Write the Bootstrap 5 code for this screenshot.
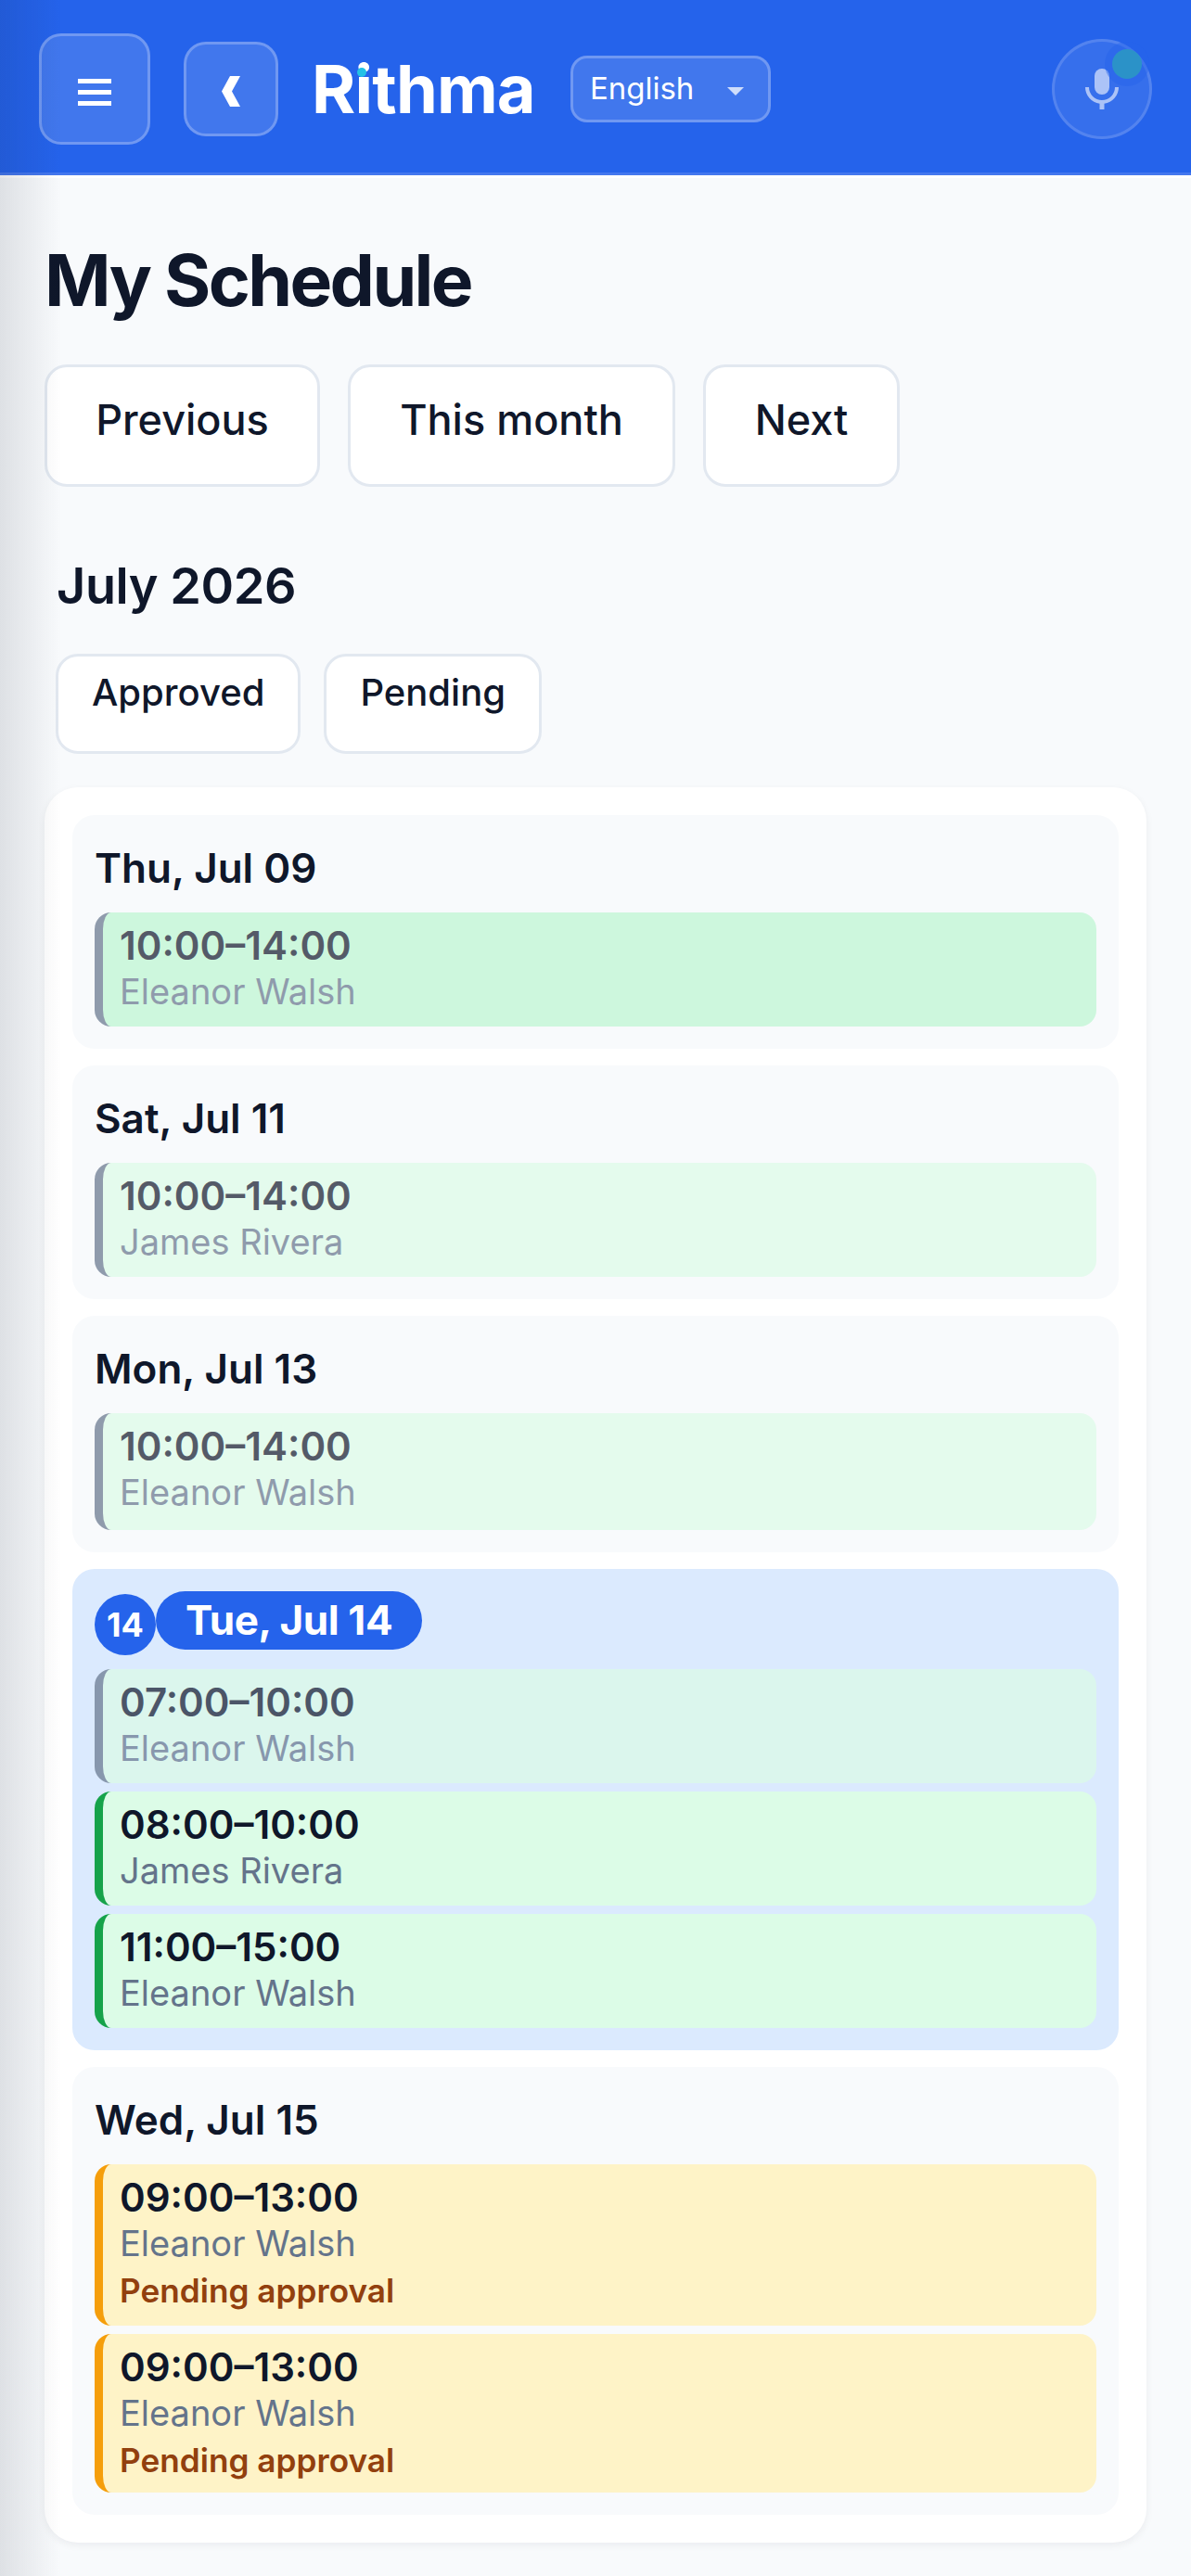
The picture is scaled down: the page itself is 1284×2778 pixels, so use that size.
<!DOCTYPE html>
<html lang="en">

<head>
    <meta charset="UTF-8" />
    <meta name="viewport" content="width=device-width, initial-scale=1.0" />
    <title>Rithma - My Schedule</title>
    <link href="https://cdn.jsdelivr.net/npm/bootstrap@5.3.2/dist/css/bootstrap.min.css" rel="stylesheet" />
    <style>
        body {
            background: #f8fafc;
            color: #0f172a;
            font-family: Inter, "Liberation Sans", sans-serif;
        }

        .edge-shade {
            position: fixed;
            top: 0;
            left: 0;
            bottom: 0;
            width: 66px;
            background: linear-gradient(to right, rgba(15, 23, 42, 0.11), rgba(15, 23, 42, 0));
            pointer-events: none;
            z-index: 10;
        }

        .app-bar {
            background: #2563eb;
            border-bottom: 3px solid #4477ee;
            box-shadow: 0 3px 0 #ffffff;
            padding: 36px 42px 30px 42px;
        }

        .glass-btn {
            background: rgba(255, 255, 255, 0.13);
            border: 3px solid rgba(255, 255, 255, 0.25);
            color: #fff;
            padding: 0;
        }

        .menu-btn {
            width: 120px;
            height: 120px;
            border-radius: 24px;
            margin-right: 36px;
        }

        .menu-btn svg {
            margin-top: 7px;
        }

        .back-btn {
            width: 102px;
            height: 102px;
            border-radius: 24px;
            margin-right: 36px;
        }

        .back-btn svg {
            margin-top: 5px;
        }

        .brand-name {
            position: relative;
            font-size: 72px;
            font-weight: 700;
            line-height: 1;
            letter-spacing: -0.8px;
            color: #fff;
            margin-right: 38px;
        }

        .brand-dot {
            position: absolute;
            left: 49px;
            top: 13px;
            width: 10px;
            height: 10px;
            border-radius: 50%;
            background: #22c1e6;
        }

        .lang-btn {
            width: 216px;
            height: 72px;
            border-radius: 18px;
            font-size: 33px;
            font-family: Inter, sans-serif;
            text-align: left;
            padding: 0 0 0 18px;
        }

        .lang-btn:hover,
        .lang-btn:active {
            color: #fff;
        }

        .lang-btn::after {
            border-top-width: 9px;
            border-left-width: 9px;
            border-right-width: 9px;
            margin-left: 36px;
            vertical-align: 4px;
            opacity: 0.75;
        }

        .mic-btn {
            position: relative;
            width: 108px;
            height: 108px;
            border-radius: 50%;
            opacity: 0.62;
        }

        .mic-dot {
            position: absolute;
            top: 8px;
            right: 8px;
            width: 32px;
            height: 32px;
            border-radius: 50%;
            background: #2fb0b4;
            box-shadow: 0 0 0 8px rgba(37, 99, 235, 0.45);
        }

        .page-title {
            font-size: 76.8px;
            font-weight: 700;
            line-height: 84px;
            letter-spacing: -2.6px;
            margin: 0 0 48px;
        }

        .page-body {
            padding: 72px 48px 36px;
        }

        .plain-btn {
            background: #fff;
            border: 3px solid #e2e8f0;
            color: #0f172a;
            font-weight: 500;
        }

        .month-btn {
            height: 132px;
            border-radius: 24px;
            font-size: 45px;
            line-height: 1;
            padding: 0 0 14px;
        }

        .prev-btn {
            width: 297px;
        }

        .this-btn {
            width: 353px;
        }

        .next-btn {
            width: 212px;
        }

        .month-name {
            font-size: 54px;
            font-weight: 600;
            line-height: 72px;
            letter-spacing: -0.4px;
            margin: 71px 0 37px 13px;
        }

        .filter-btn {
            height: 108px;
            border-radius: 24px;
            font-size: 40px;
            line-height: 1;
            padding: 0 36px 24px;
        }

        .filter-row {
            margin-left: 12px;
            margin-bottom: 36px;
        }

        .sched-card {
            background: #fff;
            border-radius: 36px;
            border: 0;
            padding: 30px;
            box-shadow: 0 3px 9px rgba(15, 23, 42, 0.06);
        }

        .day-box {
            background: #f8fafc;
            border-radius: 24px;
            padding: 24px;
        }

        .day-box.today {
            background: #dbeafe;
        }

        .day-title {
            font-size: 44px;
            font-weight: 600;
            line-height: 66px;
            margin-bottom: 15px;
        }

        .day-badge {
            width: 66px;
            height: 66px;
            margin-top: 3px;
            border-radius: 50%;
            background: #2563eb;
            color: #fff;
            font-size: 36px;
            font-weight: 700;
        }

        .day-pill {
            height: 63px;
            border-radius: 32px;
            background: #2563eb;
            color: #fff;
            font-size: 44px;
            font-weight: 700;
            line-height: 63px;
            letter-spacing: -0.4px;
            padding: 0 32px;
        }

        .shift {
            background: #dcfce7;
            border-left: 9px solid #16a34a;
            border-radius: 18px;
            padding: 12px 12px 12px 18px;
        }

        .shift.past {
            opacity: 0.7;
            border-left-color: #64748b;
        }

        .shift.now {
            background: #bbf7d0;
        }

        .shift.waiting {
            background: #fef3c7;
            border-left-color: #f59e0b;
        }

        .shift.tall {
            padding-bottom: 15px;
        }

        .shift-time {
            font-size: 42px;
            font-weight: 600;
            line-height: 48px;
        }

        .shift-name {
            font-size: 38px;
            line-height: 51px;
            color: #64748b;
        }

        .shift-note {
            font-size: 35.2px;
            font-weight: 600;
            line-height: 45px;
            margin-top: 3px;
            color: #92400e;
        }
    </style>
</head>

<body>
    <div class="edge-shade"></div>

    <header class="app-bar d-flex align-items-center">
        <button class="btn glass-btn menu-btn d-flex align-items-center justify-content-center" aria-label="Menu">
            <svg width="36" height="29" viewBox="0 0 36 29" fill="#fff">
                <rect y="0" width="36" height="5" />
                <rect y="12" width="36" height="5" />
                <rect y="24" width="36" height="5" />
            </svg>
        </button>
        <button class="btn glass-btn back-btn d-flex align-items-center justify-content-center" aria-label="Back">
            <svg width="20" height="33" viewBox="0 0 20 33" fill="#fff">
                <polygon points="9,0 20,0 11,16.5 20,33 9,33 0,16.5" />
            </svg>
        </button>
        <span class="brand-name">Rithma<span class="brand-dot"></span></span>
        <button class="btn glass-btn lang-btn dropdown-toggle">English</button>
        <button class="btn glass-btn mic-btn ms-auto d-flex align-items-center justify-content-center" aria-label="Voice">
            <svg width="36" height="44" viewBox="0 0 36 44" fill="#fff">
                <rect x="10" y="0" width="16" height="28" rx="8" />
                <path d="M0 20h4a14 14 0 0 0 28 0h4a18 18 0 0 1-15.5 17.8V44h-5v-6.2A18 18 0 0 1 0 20z" />
            </svg>
            <span class="mic-dot"></span>
        </button>
    </header>

    <main class="page-body">
        <h1 class="page-title">My Schedule</h1>

        <div class="d-flex month-nav" style="gap: 30px">
            <button class="btn plain-btn month-btn prev-btn">Previous</button>
            <button class="btn plain-btn month-btn this-btn">This month</button>
            <button class="btn plain-btn month-btn next-btn">Next</button>
        </div>

        <h2 class="month-name">July 2026</h2>

        <div class="d-flex filter-row" style="gap: 25px">
            <button class="btn plain-btn filter-btn">Approved</button>
            <button class="btn plain-btn filter-btn">Pending</button>
        </div>

        <div class="card sched-card d-flex flex-column" style="gap: 18px">
            <section class="day-box">
                <div class="day-title">Thu, Jul 09</div>
                <div class="shift past now">
                    <div class="shift-time">10:00–14:00</div>
                    <div class="shift-name">Eleanor Walsh</div>
                </div>
            </section>

            <section class="day-box">
                <div class="day-title">Sat, Jul 11</div>
                <div class="shift past">
                    <div class="shift-time">10:00–14:00</div>
                    <div class="shift-name">James Rivera</div>
                </div>
            </section>

            <section class="day-box">
                <div class="day-title">Mon, Jul 13</div>
                <div class="shift past tall">
                    <div class="shift-time">10:00–14:00</div>
                    <div class="shift-name">Eleanor Walsh</div>
                </div>
            </section>

            <section class="day-box today">
                <div class="d-flex align-items-start" style="margin-bottom: 15px">
                    <span class="day-badge d-flex align-items-center justify-content-center">14</span>
                    <span class="day-pill">Tue, Jul 14</span>
                </div>
                <div class="d-flex flex-column" style="gap: 9px">
                    <div class="shift past">
                        <div class="shift-time">07:00–10:00</div>
                        <div class="shift-name">Eleanor Walsh</div>
                    </div>
                    <div class="shift">
                        <div class="shift-time">08:00–10:00</div>
                        <div class="shift-name">James Rivera</div>
                    </div>
                    <div class="shift">
                        <div class="shift-time">11:00–15:00</div>
                        <div class="shift-name">Eleanor Walsh</div>
                    </div>
                </div>
            </section>

            <section class="day-box">
                <div class="day-title">Wed, Jul 15</div>
                <div class="d-flex flex-column" style="gap: 9px">
                    <div class="shift waiting tall">
                        <div class="shift-time">09:00–13:00</div>
                        <div class="shift-name">Eleanor Walsh</div>
                        <div class="shift-note">Pending approval</div>
                    </div>
                    <div class="shift waiting">
                        <div class="shift-time">09:00–13:00</div>
                        <div class="shift-name">Eleanor Walsh</div>
                        <div class="shift-note">Pending approval</div>
                    </div>
                </div>
            </section>
        </div>
    </main>

    <script src="https://cdn.jsdelivr.net/npm/bootstrap@5.3.2/dist/js/bootstrap.bundle.min.js"></script>
</body>

</html>
